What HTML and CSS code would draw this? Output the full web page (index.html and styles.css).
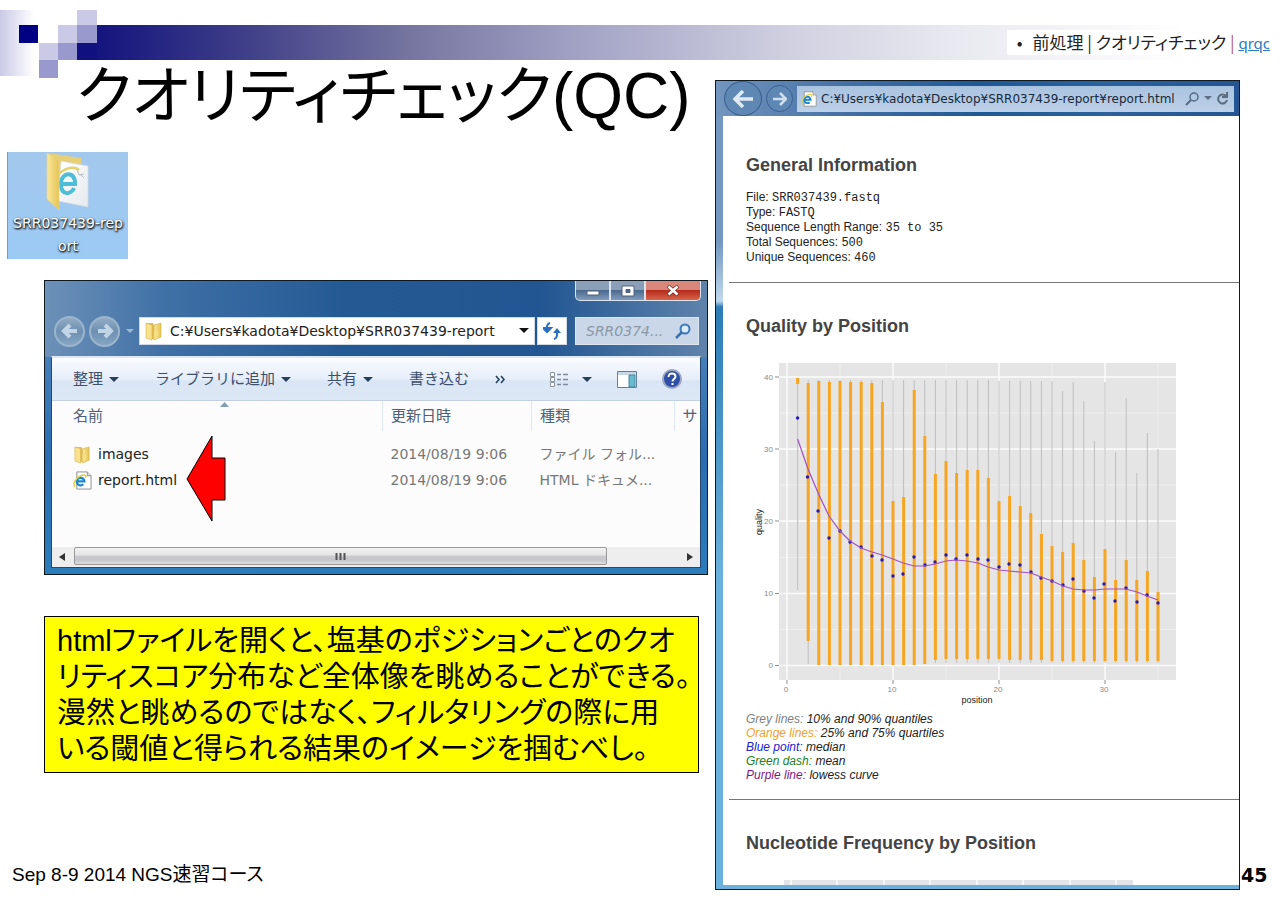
FILE: index.html
```html
<!DOCTYPE html>
<html lang="ja">
<head>
<meta charset="utf-8">
<meta name="viewport" content="width=device-width, initial-scale=1">
<title>クオリティチェック(QC)</title>
<link rel="stylesheet" href="styles.css">
</head>
<body>
<svg class="defs" width="0" height="0" aria-hidden="true">
  <defs>
    <linearGradient id="gold" x1="0" x2="1"><stop offset="0" stop-color="#f9e79b"/><stop offset="1" stop-color="#e6c554"/></linearGradient>
    <linearGradient id="paper" x1="0" x2="1" y2="1"><stop offset="0" stop-color="#fff"/><stop offset="1" stop-color="#e6eaee"/></linearGradient>
    <symbol id="folder" viewBox="0 0 18 20">
      <path d="M2 2h6l1 2v14H4z" fill="#e5c04e"/><path d="M1 2l6 2v15l-6-2z" fill="#f8e28c" stroke="#d5ae45" stroke-width=".6"/>
      <path d="M9 4l7-2v14l-7 3z" fill="url(#gold)" stroke="#d5ae45" stroke-width=".6"/><path d="M9 10h4v5l-4 2z" fill="#f7df83"/>
    </symbol>
    <symbol id="iepage" viewBox="0 0 20 20">
      <path d="M4 1h11l4 4v14H4z" fill="#fff" stroke="#8d8d8d"/><path d="M15 1v4h4" fill="#ddd" stroke="#8d8d8d"/>
      <path d="M4.500 11h7.500a4 4 0 1 0-1.200 3" fill="none" stroke="#1b86cf" stroke-width="2.400"/>
      <path d="M2 16.500C-1 14 3 7 8 5s7 0 5 2" fill="none" stroke="#e6cf36" stroke-width="1.500"/>
    </symbol>
  </defs>
</svg>

<header class="band">
  <svg class="blocks" width="97" height="68" viewBox="0 10 97 68" aria-hidden="true">
    <defs><linearGradient id="fade"><stop offset="0" stop-color="#c9c9e6"/><stop offset="1" stop-color="#fff"/></linearGradient></defs>
    <path fill="url(#fade)" d="M0 10h34v66H0z"/>
    <path fill="#000082" d="M19 25h19v18H19z"/>
    <path fill="#10107f" d="M77 25h20v35H77z"/>
    <path fill="#cacae6" d="M77 10h20v15H77zM58 25h19v18H58zM39 43h19v17H39z"/>
    <path fill="#9999cd" d="M77 25h20v18H77zM58 43h19v17H58zM39 60h19v18H39z"/>
  </svg>
  <div class="bar">
    <nav class="crumb"><span>•</span><span>前処理 | クオリティチェック <i class="pipe">|</i> <a href="#qrqc">qrqc</a></span></nav>
  </div>
</header>

<main class="slide">
  <div class="left">
    <h1>クオリティチェック<span class="latin">(QC)</span></h1>

    <figure class="desk-icon">
      <svg width="44" height="60" viewBox="0 0 44 60" aria-hidden="true">
        <path d="M2 1l33 5v8L12 20z" fill="#e6cf75"/>
        <path d="M15 9l27 5v41l-30-6z" fill="url(#paper)" stroke="#d4d8dc" stroke-width=".7"/>
        <path d="M30 15l3 8 5-1M34 22l4 4" fill="none" stroke="#b9bcc0"/>
        <path d="M15 32h14c1-13-14-13-14 0s11 10 13 4" fill="none" stroke="#4dbdd8" stroke-width="4"/>
        <path d="M12 22c9-7 17-8 21-4" fill="none" stroke="#e6d268" stroke-width="2.500"/>
        <path d="M1 1l12 8v49L1 47z" fill="url(#gold)" stroke="#e9d38a" stroke-width=".7"/>
      </svg>
      <figcaption>SRR037439-rep<br>ort</figcaption>
    </figure>

    <section class="explorer" aria-label="SRR037439-report">
      <div class="caption-buttons">
        <button aria-label="最小化"><svg width="16" height="12"><path d="M2 6h12v4H2z" fill="#fff" stroke="#50627a"/></svg></button>
        <button aria-label="最大化"><svg width="16" height="14"><path d="M2 2h12v10H2zM6 5.500h4v3H6z" fill="#fff" fill-rule="evenodd" stroke="#50627a"/></svg></button>
        <button class="close" aria-label="閉じる"><svg width="14" height="12"><path d="M2 1l10 9M12 1L2 10" stroke="#793131" stroke-width="4"/><path d="M2.500 1.500l9 8M11.500 1.500l-9 8" stroke="#fff" stroke-width="2.500"/></svg></button>
      </div>
      <div class="address-row">
        <button class="round" aria-label="戻る"><svg width="20" height="20"><path d="M17 10H5M10 4l-6 6 6 6" fill="none" stroke="#c2d5e6" stroke-width="4"/></svg></button>
        <button class="round" aria-label="進む"><svg width="20" height="20"><path d="M3 10h12M10 4l6 6-6 6" fill="none" stroke="#c2d5e6" stroke-width="4"/></svg></button>
        <svg class="tiny" width="8" height="5" aria-hidden="true"><path d="M0 0h8L4 4z" fill="#9db9d6"/></svg>
        <div class="address">
          <svg width="18" height="20" aria-hidden="true"><use href="#folder"/></svg>
          <input aria-label="アドレス" value="C:¥Users¥kadota¥Desktop¥SRR037439-report">
          <svg width="10" height="6" aria-hidden="true"><path d="M0 0h10L5 5z" fill="#111"/></svg>
        </div>
        <button class="refresh" aria-label="更新"><svg width="18" height="18"><path d="M7 1C3 2 4 5 4 8M0 6h8l-4 4zM11 17c4-1 3-4 3-7" fill="none" stroke="#2c6fc0" stroke-width="2"/><path d="M0 6h8l-4 5zM10 11h8l-4-5z" fill="#2c6fc0"/></svg></button>
        <div class="search">
          <input aria-label="検索" placeholder="SRR0374...">
          <svg width="16" height="16" aria-hidden="true"><circle cx="10" cy="6" r="4.500" fill="#dcebf8" stroke="#3a78b8" stroke-width="2"/><path d="M7 9l-6 6" stroke="#3a70a8" stroke-width="2.500"/></svg>
        </div>
      </div>
      <div class="pane">
        <div class="toolbar">
          <button>整理<i class="caret"></i></button>
          <button>ライブラリに追加<i class="caret"></i></button>
          <button>共有<i class="caret"></i></button>
          <button>書き込む</button>
          <button class="more" aria-label="その他"><svg width="11" height="9"><path d="M1 1l3 3.500L1 8M6 1l3 3.500L6 8" fill="none" stroke="#24415f" stroke-width="1.600"/></svg></button>
          <span class="tools">
            <button aria-label="表示"><svg width="19" height="15"><path d="M.5.5h4v4h-4zM.5 5.500h4v4h-4zM.5 10.500h4v4h-4z" fill="#fff" stroke="#8b93a2"/><path d="M7 2.500h4M13 2.500h5M7 7.500h4M13 7.500h5M7 12.500h4M13 12.500h5" stroke="#828b9b" stroke-width="1.500"/></svg><i class="caret wide"></i></button>
            <button aria-label="プレビュー"><svg width="20" height="17"><path d="M.5.5h19v16H.5z" fill="#fff" stroke="#5f7f9c"/><path d="M1 1h18v3H1z" fill="#c6d7e6"/><path d="M12 4h6v12h-6z" fill="#67bcd0" stroke="#4b839b"/></svg></button>
            <button aria-label="ヘルプ"><svg width="20" height="20" viewBox="0 0 20 20"><circle cx="10" cy="10" r="9" fill="#2e4fa8" stroke="#9aa6c0" stroke-width="2"/><path d="M6.500 8c0-5 7-4 7-.5 0 2.500-3 2.500-3 5M10.500 14v2" fill="none" stroke="#fff" stroke-width="2"/></svg></button>
          </span>
        </div>
        <table>
          <colgroup><col class="c-name"><col class="c-date"><col class="c-type"><col class="c-size"></colgroup>
          <thead><tr><th>名前<svg class="sort" width="9" height="5" aria-hidden="true"><path d="M0 5l4.500-5L9 5z" fill="#7f9eb5"/></svg></th><th>更新日時</th><th>種類</th><th>サ</th></tr></thead>
          <tbody>
            <tr><td><span class="file"><svg width="19" height="19" aria-hidden="true"><use href="#folder"/></svg>images</span></td><td>2014/08/19 9:06</td><td>ファイル フォル...</td><td></td></tr>
            <tr><td><span class="file"><svg width="19" height="19" aria-hidden="true"><use href="#iepage"/></svg>report.html</span></td><td>2014/08/19 9:06</td><td>HTML ドキュメ...</td><td></td></tr>
          </tbody>
        </table>
        <div class="scroll">
          <button aria-label="左へ"><svg width="6" height="8"><path d="M6 0v8L0 4z" fill="#333"/></svg></button>
          <div class="track"><div class="thumb"><svg width="11" height="7"><path d="M1.500 0v7M5.500 0v7M9.500 0v7" stroke="#555" stroke-width="2"/></svg></div></div>
          <button aria-label="右へ"><svg width="6" height="8"><path d="M0 0v8l6-4z" fill="#333"/></svg></button>
        </div>
      </div>
      <svg class="arrow" width="40" height="88" viewBox="186 435 40 88" aria-hidden="true"><path d="M187 480l25-43v22h13v42h-13v21z" fill="#f00" stroke="#000"/></svg>
    </section>

    <p class="note">htmlファイルを開くと、塩基のポジションごとのクオ<br>リティスコア分布など全体像を眺めることができる。<br>漫然と眺めるのではなく、フィルタリングの際に用<br>いる閾値と得られる結果のイメージを掴むべし。</p>

    <footer>Sep 8-9 2014 NGS速習コース</footer>
  </div>

  <section class="browser" aria-label="report.html">
    <div class="browser-bar">
      <button class="nav big" aria-label="戻る"><svg width="22" height="18"><path d="M21 9H4M11 1L3 9l8 8" fill="none" stroke="#dfe9f2" stroke-width="3.500"/></svg></button>
      <button class="nav" aria-label="進む"><svg width="14" height="14"><path d="M0 7h12M7 1l6 6-6 6" fill="none" stroke="#cfdeed" stroke-width="2.500"/></svg></button>
      <div class="url">
        <svg width="16" height="16" aria-hidden="true"><use href="#iepage"/></svg>
        <input aria-label="URL" value="C:¥Users¥kadota¥Desktop¥SRR037439-report¥report.html">
        <svg width="15" height="14" aria-hidden="true"><circle cx="9" cy="5" r="4" fill="none" stroke="#566b85" stroke-width="1.500"/><path d="M6 8l-5 5" stroke="#566b85" stroke-width="2"/></svg>
        <svg width="8" height="5" aria-hidden="true"><path d="M0 0h8L4 4z" fill="#5d7088"/></svg>
        <svg width="13" height="14" aria-hidden="true"><path d="M10 4a4.500 4.500 0 1 0 1 4M11 0v5H6" fill="none" stroke="#5d6c80" stroke-width="2"/></svg>
      </div>
    </div>
    <article class="report">
      <section>
        <h2>General Information</h2>
        <p class="info">File: <code>SRR037439.fastq</code><br>Type: <code>FASTQ</code><br>Sequence Length Range: <code>35 to 35</code><br>Total Sequences: <code>500</code><br>Unique Sequences: <code>460</code></p>
      </section>
      <section>
        <h2>Quality by Position</h2>
        <svg class="chart" viewBox="747 360 440 348" role="img" aria-label="quality / position">
          <path d="M780 363h397v317H780z" fill="#e5e5e5"/>
          <path d="M780 413h397M780 485h397M780 557.500h397M780 629.500h397M841 363v317M947 363v317M1053 363v317M1159 363v317" stroke="#efefef"/>
          <path d="M780 377h397M780 449h397M780 521h397M780 593.500h397M780 665.500h397M788 363v317M894 363v317M1000 363v317M1106 363v317" stroke="#fbfbfb" stroke-width="1.500"/>
          <path d="M776 377h4M776 449h4M776 521h4M776 593.500h4M776 665.500h4M788 680v4M894 680v4M1000 680v4M1106 680v4" stroke="#8d8d8d"/>
          <path d="M798.600 384V590M809.200 380V664M819.800 380V664M830.400 380V664M841 380V664M851.600 380V664M862.200 380V664M872.800 380V664M883.400 380V664M894 380V664M904.600 380V664M915.200 380V664M925.800 380V664M936.400 380V663M947 380V663M957.600 380V663M968.200 380V663M978.800 380V663M989.400 380V663M1000 381V663M1010.600 381V663M1021.200 381V663M1031.800 381V663M1042.400 381V663M1053 381V663M1063.600 391V663M1074.200 382V663M1084.800 401V663M1095.400 441V663M1106 382V663M1116.600 452V663M1127.200 398V663M1137.800 473V663M1148.400 433V663M1159 449V663" stroke="#bebebe"/>
          <path d="M798.600 378V384M809.200 383V641M819.800 381V665M830.400 382V665M841 381V665M851.600 382V665M862.200 382V665M872.800 383V665M883.400 402V665M894 501V665M904.600 497V665M915.200 390V665M925.800 436V664M936.400 474V660M947 461V659M957.600 473V659M968.200 470V659M978.800 470V659M989.400 478V659M1000 501V659M1010.600 496V660M1021.200 506V660M1031.800 513V660M1042.400 534V660M1053 546V661M1063.600 552V661M1074.200 543V661M1084.800 560V661M1095.400 577V661M1106 549V661M1116.600 580V661M1127.200 560V661M1137.800 580V661M1148.400 571V661M1159 592V661" stroke="#f6a623" stroke-width="3"/>
          <path d="M798.600 418h0M808.500 477h0M819 511h0M830 538h0M841 531h0M851 542h0M862 547h0M873 556h0M883 560h0M894 576h0M904 574h0M915 557h0M926 565h0M936 562h0M947 555h0M957 559h0M968 555h0M979 559h0M989 560h0M1000 567h0M1010 564h0M1021 565h0M1032 572h0M1042 578h0M1053 581h0M1064 585h0M1074 579h0M1085 591h0M1095 598h0M1105 584h0M1116 601h0M1127 588h0M1138 602h0M1148 595h0M1159 603h0" stroke="#2918b4" stroke-width="3.400" stroke-linecap="round"/>
          <path d="M798.600 439L809 469 820 495 830 516 841 531 851 541 862 548 873 552 883 555 894 559 904 563 915 566 926 566 936 564 947 561 957 560 968 561 979 563 989 567 1000 570 1010 571 1021 572 1032 573 1042 577 1053 581 1064 586 1074 589 1085 590 1095 590 1106 589 1127 589 1138 592 1148 596 1159 600" fill="none" stroke="#a34fc4" stroke-width="1.200"/>
          <g class="ticks" text-anchor="end"><text x="774" y="380">40</text><text x="774" y="452">30</text><text x="774" y="524">20</text><text x="774" y="596">10</text><text x="774" y="668">0</text></g>
          <g class="ticks" text-anchor="middle"><text x="787" y="692">0</text><text x="893" y="692">10</text><text x="999" y="692">20</text><text x="1105" y="692">30</text></g>
          <text class="axis" text-anchor="middle" x="978" y="703">position</text>
          <text class="axis" text-anchor="middle" transform="translate(763 522) rotate(-90)">quality</text>
        </svg>
        <p class="legend"><span class="grey">Grey lines:</span> 10% and 90% quantiles<br><span class="orange">Orange lines:</span> 25% and 75% quartiles<br><span class="blue">Blue point:</span> median<br><span class="green">Green dash:</span> mean<br><span class="purple">Purple line:</span> lowess curve</p>
      </section>
      <section>
        <h2>Nucleotide Frequency by Position</h2>
        <svg class="next" width="349" height="5" viewBox="785 0 349 5" aria-hidden="true"><path d="M785 0h349v5H785z" fill="#e3e4ea"/><path d="M792 0v5M838 0v5M885 0v5M931 0v5M978 0v5M1024 0v5M1071 0v5M1117 0v5" stroke="#f6f6f8" stroke-width="2"/></svg>
      </section>
    </article>
  </section>

  <div class="page-no">45</div>
</main>
</body>
</html>
```
FILE: styles.css
```css
* { box-sizing: border-box; }
body {
  margin: 0;
  background: #fff;
  color: #000;
  font-family: "Liberation Sans", "Noto Sans CJK JP", sans-serif;
}
button { margin: 0; padding: 0; border: 0; background: none; font: inherit; color: inherit; }
button, .url, .address, .search { display: flex; align-items: center; }
button { justify-content: center; }
input { min-width: 0; flex: 1; padding: 0; border: 0; background: none; outline: 0; font: inherit; color: inherit; }
svg { flex: none; display: block; }
.defs { position: absolute; }

.band { display: flex; align-items: flex-start; height: 62px; padding-top: 10px; }
.bar {
  flex: 1;
  display: flex;
  align-items: center;
  justify-content: flex-end;
  height: 35px;
  margin-top: 15px;
  background: linear-gradient(90deg, #14147f 0, #3d3d88 12%, #74749f 26%, #a0a0c4 40%, #cfcfe0 58%, #e8e8f0 72%, #fff 92%);
}
.crumb {
  display: flex;
  gap: 10px;
  padding: 0 10px;
  background: #fff;
  color: #222;
  font: 17px/23px "Noto Sans CJK JP", sans-serif;
  font-feature-settings: "palt";
}
.crumb a { color: #2b7bc0; font-family: "Noto Sans", sans-serif; font-size: 15px; }
.pipe { font-style: normal; color: #b06060; }

.slide {
  display: grid;
  grid-template-columns: minmax(0, 708fr) minmax(0, 525fr) 33px;
  column-gap: 7px;
  padding-bottom: 13px;
}
.left { display: flex; flex-direction: column; }
h1 {
  margin: 0 0 21px 76px;
  font-size: 62px;
  line-height: 68px;
  font-weight: 400;
  font-feature-settings: "palt";
  white-space: nowrap;
}
.latin { font-size: 64px; }

.desk-icon {
  display: flex;
  flex-direction: column;
  align-items: center;
  width: 121px;
  margin: 0 0 21px 7px;
  padding-bottom: 1px;
  border-left: 1px solid #7d99b8;
  background: linear-gradient(#a3c8ee, #9bcaf4);
  color: #fff;
  font: 14px/23px "DejaVu Sans", sans-serif;
  text-align: center;
  text-shadow: 1px 1px 2px #000, 0 1px 2px #222;
}

.explorer {
  position: relative;
  margin-left: 44px;
  padding: 0 6px 6px;
  border: 1px solid #101820;
  background: linear-gradient(90deg, #6d91b8 0, #3f70a6 18%, #245a94 45%, #225692 75%, #5f83ab 100%) top / 100% 76px no-repeat, linear-gradient(#5b8cc0, #2a6db0 60%, #2a7cba);
  font: 14px/20px "DejaVu Sans", "Noto Sans CJK JP", sans-serif;
}
.caption-buttons { display: flex; justify-content: flex-end; height: 20px; }
.caption-buttons button { width: 35px; border: 1px solid #dbe3ee; border-top: 0; background: linear-gradient(#8b9fb8 45%, #4c6a8e 50%, #7f9cbd); }
.caption-buttons button:first-child { border-radius: 0 0 0 5px; }
.caption-buttons .close { width: 56px; border-radius: 0 0 5px 0; background: linear-gradient(#d9877a 45%, #b52c1c 50%, #d86448); }
.address-row { display: flex; align-items: center; height: 55px; padding: 8px 2px 3px 3px; gap: 2px; }
.round { width: 31px; height: 31px; margin-right: 2px; border: 2px solid #9bb5cc; border-radius: 50%; background: linear-gradient(#93abc4, #6d8fb1 50%, #85a6c4); }
.tiny { margin: 0 3px 0 2px; }
.address { flex: 1; height: 28px; padding: 0 5px; gap: 7px; background: #fff; border: 1px solid #cfdae6; color: #222; }
.refresh { width: 30px; height: 28px; margin-right: 6px; background: #fff; border: 1px solid #cfdae6; }
.search { width: 124px; height: 28px; padding: 0 7px 0 10px; background: #c9d7e8; border: 1px solid #dde6f0; }
.search input::placeholder { color: #8b97a6; font-style: italic; opacity: 1; }

.pane { border: 1px solid #27486e; border-top: 2px solid #dce8f4; background: #fcfcfc; }
.toolbar {
  display: flex;
  align-items: center;
  gap: 36px;
  height: 43px;
  padding: 0 18px 0 21px;
  border-bottom: 1px solid #c3d0e2;
  background: linear-gradient(#fafcff, #e6eefa 50%, #dae5f5 55%, #dde8f6);
  color: #3d4f6b;
  font-size: 15px;
  white-space: nowrap;
}
.caret { margin-left: 6px; border: 5px solid transparent; border-top-color: #24415f; border-bottom: 0; }
.wide { margin-left: 13px; }
.more { margin-left: -10px; }
.tools { display: flex; align-items: center; gap: 25px; margin-left: auto; }

table { width: 100%; table-layout: fixed; border-collapse: collapse; }
.c-name { width: 51%; }
.c-date { width: 23%; }
.c-type { width: 22%; }
.c-size { width: 4%; }
th, td { padding: 0 0 0 8px; text-align: left; font-weight: 400; white-space: nowrap; overflow: hidden; }
th { height: 30px; border-left: 1px solid #dfe7f2; color: #4d6079; font-size: 15px; }
th:first-child { border-left: 0; position: relative; }
th:first-child, td:first-child { padding-left: 21px; }
.sort { position: absolute; left: 51%; top: 1px; }
td { height: 26px; color: #777; }
tbody tr:first-child td { height: 36px; padding-top: 10px; }
.file { display: flex; align-items: center; gap: 6px; color: #222; }

.scroll { display: flex; height: 20px; margin-top: 54px; background: #eee; }
.scroll button { width: 20px; }
.track { flex: 1; padding-left: 2px; }
.thumb { display: flex; justify-content: center; align-items: center; width: 88%; height: 18px; border: 1px solid #999; border-radius: 2px; background: linear-gradient(#f2f2f2, #e4e4e6 45%, #cacace 50%, #c6c6ca 75%, #dedee0); }
.arrow { position: absolute; left: 141px; top: 153px; }

.note {
  margin: 41px 9px 0 44px;
  padding: 6px 0 5px 12px;
  border: 1px solid #000;
  background: #ff0;
  font-size: 29px;
  line-height: 36px;
  font-feature-settings: "palt";
  white-space: nowrap;
}
footer { margin: auto 0 3px 12px; font-size: 19px; line-height: 24px; font-feature-settings: "palt"; }

.browser {
  display: flex;
  flex-direction: column;
  margin-top: 18px;
  padding: 0 0 4px 7px;
  border: 1px solid #101820;
  background: linear-gradient(#7397bf 0, #7397bf 160px, #c1d9ee 220px, #2d7cb5 226px, #6bb1db 500px, #6bb1db);
}
.browser-bar {
  display: flex;
  align-items: center;
  gap: 4px;
  height: 35px;
  margin-left: -7px;
  padding: 0 5px 0 8px;
  background: linear-gradient(90deg, #7396be, #426fa5 25%, #1f5995 50%, #2b629d 75%, #225591);
}
.nav { width: 27px; height: 27px; border: 1px solid #385f8d; border-radius: 50%; background: #5f87b4; }
.big { width: 38px; height: 35px; }
.url { flex: 1; height: 26px; padding: 0 5px 0 4px; gap: 4px; background: linear-gradient(#a9c3df, #bdd0e7); color: #16283c; font: 12px/20px "DejaVu Sans", sans-serif; }
.report { flex: 1; padding: 36px 0 0 6px; background: #fff; overflow: hidden; }
.report section { padding-left: 17px; }
.report section + section { margin-top: 17px; padding-top: 30px; border-top: 1px solid #777; }
h2 { margin: 0; color: #444; font-size: 18px; line-height: 26px; }
.info { margin: 12px 0 0; font-size: 12px; line-height: 15px; color: #222; }
code { font: 12px "Liberation Mono", monospace; }
.chart { width: 100%; max-width: 440px; height: auto; margin-top: 21px; }
.ticks { fill: #8a8a8a; font-size: 8px; }
.axis { fill: #222; font-size: 9px; }
.legend { margin: 4px 0 0; font-size: 12px; line-height: 14px; font-style: italic; color: #222; }
.grey { color: #808080; }
.orange { color: #f0a12c; }
.blue { color: #2222cc; }
.green { color: #228022; }
.purple { color: #80187f; }
.next { margin: 24px 0 0 38px; }

.page-no { align-self: end; margin-left: -6px; font: bold 19px/30px "DejaVu Sans", sans-serif; }
```
